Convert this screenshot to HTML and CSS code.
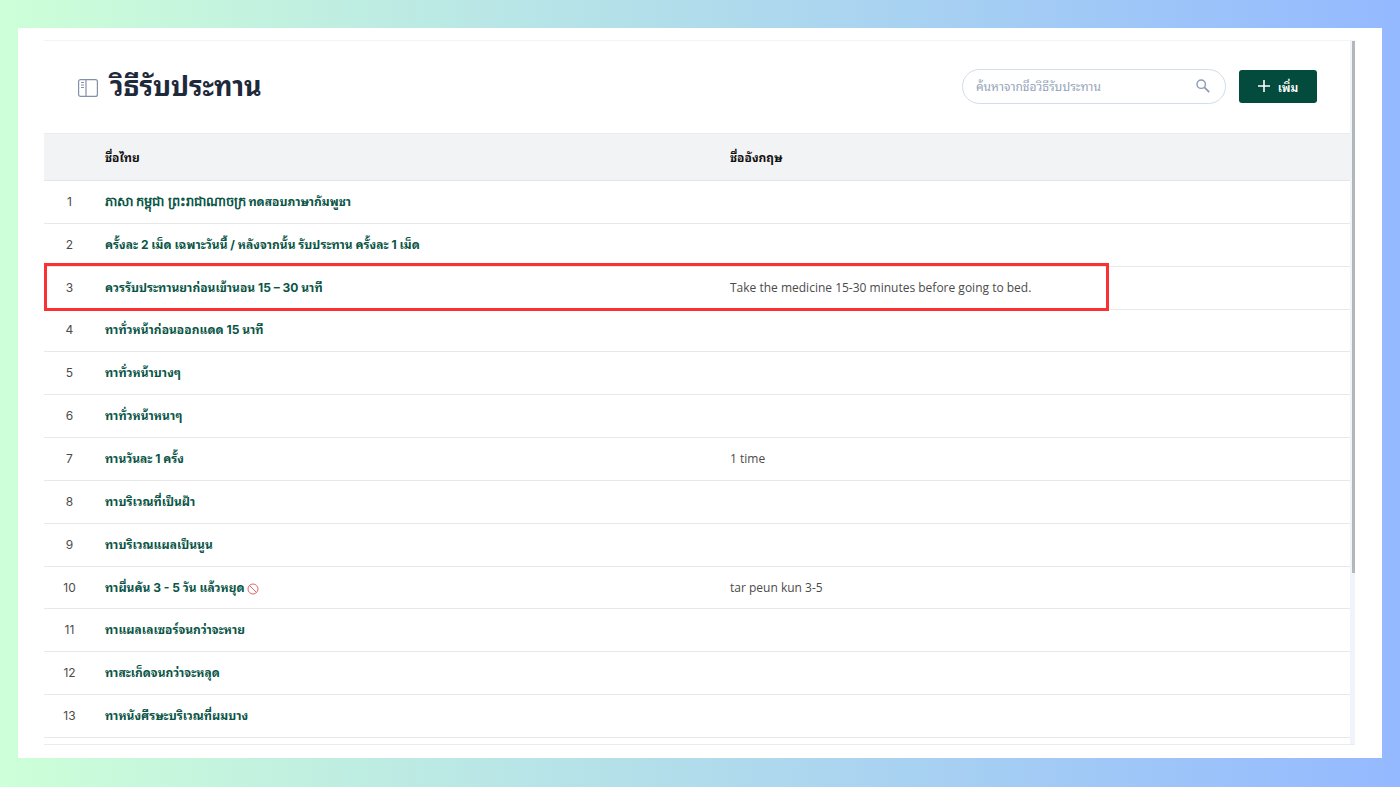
FILE: index.html
```html
<!DOCTYPE html>
<html lang="th">
<head>
    <meta charset="UTF-8">
    <meta name="viewport" content="width=device-width, initial-scale=1.0">
    <title>วิธีรับประทาน</title>
    <link rel="stylesheet" href="styles.css">
</head>
<body>
    <main class="card">
        <div class="panel">
            <div class="content">
                <header class="page-header">
                    <svg class="sidebar-icon" viewBox="0 0 20 18" fill="none" stroke="#8290a8">
                        <rect x="0.6" y="0.6" width="18.8" height="16.8" rx="2" stroke-width="1.2"/>
                        <path d="M8 1v16" stroke-width="1.2"/>
                        <path d="M3 3.5h3M3 6h3M3 8.5h3"/>
                    </svg>
                    <h1 class="page-title">วิธีรับประทาน</h1>
                    <label class="search">
                        <input class="search-input" type="text" placeholder="ค้นหาจากชื่อวิธีรับประทาน" aria-label="ค้นหาจากชื่อวิธีรับประทาน">
                        <svg class="search-icon" viewBox="0 0 14 14" fill="none" stroke="#8d9bb3" stroke-width="1.4">
                            <circle cx="5.2" cy="5.2" r="4.2"/>
                            <path d="M8.4 8.4l4.8 4.8" stroke-width="1.8"/>
                        </svg>
                    </label>
                    <button class="add-button" type="button">
                        <svg class="plus-icon" viewBox="0 0 12 12" stroke="#fff" stroke-width="1.6">
                            <path d="M6 0v12M0 6h12"/>
                        </svg>
                        เพิ่ม
                    </button>
                </header>

                <table class="usage-table">
                    <thead>
                        <tr><th class="col-no"></th><th class="col-th">ชื่อไทย</th><th>ชื่ออังกฤษ</th></tr>
                    </thead>
                    <tbody>
                        <tr><td>1</td><td><a href="#"><span class="khmer" lang="km">ភាសា កម្ពុជា ព្រះរាជាណាចក្រ</span> ทดสอบภาษากัมพูชา</a></td><td></td></tr>
                        <tr><td>2</td><td><a href="#">ครั้งละ 2 เม็ด เฉพาะวันนี้ / หลังจากนั้น รับประทาน ครั้งละ 1 เม็ด</a></td><td></td></tr>
                        <tr class="marked"><td>3</td><td><a href="#">ควรรับประทานยาก่อนเข้านอน 15 – 30 นาที</a></td><td>Take the medicine 15-30 minutes before going to bed.</td></tr>
                        <tr><td>4</td><td><a href="#">ทาทั่วหน้าก่อนออกแดด 15 นาที</a></td><td></td></tr>
                        <tr><td>5</td><td><a href="#">ทาทั่วหน้าบางๆ</a></td><td></td></tr>
                        <tr><td>6</td><td><a href="#">ทาทั่วหน้าหนาๆ</a></td><td></td></tr>
                        <tr><td>7</td><td><a href="#">ทานวันละ 1 ครั้ง</a></td><td>1 time</td></tr>
                        <tr><td>8</td><td><a href="#">ทาบริเวณที่เป็นฝ้า</a></td><td></td></tr>
                        <tr><td>9</td><td><a href="#">ทาบริเวณแผลเป็นนูน</a></td><td></td></tr>
                        <tr><td>10</td><td><a href="#">ทาผื่นคัน 3 - 5 วัน แล้วหยุด <svg class="stop-icon" viewBox="0 0 12 12" fill="none" stroke="#e0676b"><circle cx="6" cy="6" r="5"/><path d="M2.5 2.5l7 7"/></svg></a></td><td>tar peun kun 3-5</td></tr>
                        <tr><td>11</td><td><a href="#">ทาแผลเลเซอร์จนกว่าจะหาย</a></td><td></td></tr>
                        <tr><td>12</td><td><a href="#">ทาสะเก็ดจนกว่าจะหลุด</a></td><td></td></tr>
                        <tr><td>13</td><td><a href="#">ทาหนังศีรษะบริเวณที่ผมบาง</a></td><td></td></tr>
                    </tbody>
                </table>
            </div>
            <div class="scroll-track"><div class="scroll-thumb"></div></div>
        </div>
    </main>
</body>
</html>
```
FILE: styles.css
```css
*,
*::after {
    box-sizing: border-box;
}

body {
    margin: 0;
    min-height: 100vh;
    padding: 28px 18px 29px;
    background: linear-gradient(to right, #cdffd8, #94b9ff);
    font-family: Inter, "Noto Sans Thai Looped", Loma, Waree, sans-serif;
    font-size: 12px;
    color: #4b4b4b;
}

.card {
    padding: 12px 27px 13px 26px;
    background-color: #fff;
}

.panel {
    display: flex;
    border-top: 1px solid #f3f4f6;
    border-bottom: 1px solid #e8edf3;
}

.content {
    flex: 1;
    padding-bottom: 6px;
}

.page-header {
    display: flex;
    align-items: center;
    height: 92px;
    padding: 0 33px 2px 34px;
}

.sidebar-icon {
    width: 20px;
    height: 18px;
    margin-top: 4px;
}

.page-title {
    flex: 1;
    margin: 0 0 0 12px;
    padding-top: 2px;
    font-size: 27px;
    line-height: 36px;
    color: #1e293b;
}

.search {
    display: flex;
    align-items: center;
    width: 264px;
    height: 35px;
    padding: 0 15px 0 13px;
    border: 1px solid #d3dce8;
    border-radius: 18px;
}

.search-input {
    flex: 1;
    min-width: 0;
    padding: 0;
    border: none;
    outline: none;
    font: inherit;
}

.search-input::placeholder {
    color: #94a3b8;
}

.search-icon {
    width: 14px;
    height: 14px;
}

.add-button {
    display: flex;
    align-items: center;
    justify-content: center;
    gap: 8px;
    width: 78px;
    height: 33px;
    margin-left: 13px;
    padding: 0;
    border: none;
    border-radius: 3px;
    background-color: #024b3d;
    color: #fff;
    font: inherit;
    font-weight: 600;
}

.plus-icon {
    width: 12px;
    height: 12px;
}

.usage-table {
    width: 100%;
    height: 605px;
    border-collapse: separate;
    border-spacing: 0;
    table-layout: fixed;
}

.usage-table th {
    height: 48px;
    padding: 0 0 2px;
    background-color: #f2f3f5;
    border-top: 1px solid #e9ecf1;
    border-bottom: 1px solid #e2e5e9;
    text-align: left;
    color: #111;
}

.usage-table td {
    padding: 0;
    border-bottom: 1px solid #e8e8e8;
    line-height: 18px;
    white-space: nowrap;
}

.usage-table td:first-child {
    padding-right: 10px;
    text-align: center;
}

.usage-table td:last-child {
    font-family: "Open Sans", sans-serif;
}

.usage-table a {
    color: #0a5546;
    font-weight: 700;
    text-decoration: none;
}

.khmer {
    font-size: 13px;
    font-weight: 600;
    line-height: 12px;
}

.usage-table .col-no {
    width: 61px;
}

.usage-table .col-th {
    width: 625px;
}

.marked td:first-child {
    position: relative;
}

/* red frame over the highlighted row */
.marked td:first-child::after {
    content: '';
    position: absolute;
    top: -4px;
    left: 0;
    width: 1065px;
    height: 48px;
    border: 3px solid #fb3033;
}

.stop-icon {
    width: 12px;
    height: 12px;
    vertical-align: -3px;
}

.scroll-track {
    width: 5px;
    padding-left: 2px;
    background-color: #f0f4fa;
}

.scroll-thumb {
    height: 532px;
    background-color: #b2b7ba;
}
```
